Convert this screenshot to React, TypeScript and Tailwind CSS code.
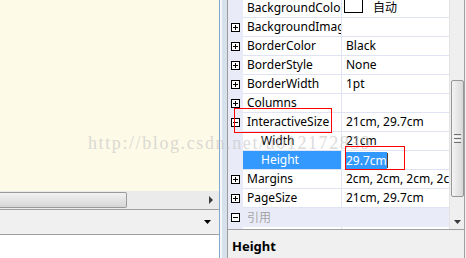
import React from "react";

const FONT = { fontFamily: '"Noto Sans", "Noto Sans CJK SC", sans-serif' };

function Box({ minus }: { minus?: boolean }) {
  return (
    <svg width="9" height="9" viewBox="0 0 9 9" className="block">
      <rect x="0.5" y="0.5" width="8" height="8" fill="white" stroke="black" />
      <line x1="2" y1="4.5" x2="7" y2="4.5" stroke="black" />
      {!minus && <line x1="4.5" y1="2" x2="4.5" y2="7" stroke="black" />}
    </svg>
  );
}

type RowProps = {
  icon?: "plus" | "minus";
  name: string;
  value?: React.ReactNode;
  child?: boolean;
  selected?: boolean;
};

function Row({ icon, name, value, child, selected }: RowProps) {
  return (
    <div className="flex h-[19px] shrink-0">
      <div className="flex w-[15px] shrink-0 items-center justify-center bg-[#e9ecf8]">
        {icon && <Box minus={icon === "minus"} />}
      </div>
      <div className="flex flex-1 border-b border-[#dfe3f3]">
        <div
          className={`flex w-[98px] shrink-0 items-center overflow-hidden whitespace-nowrap text-[12px] ${
            child ? "pl-[18px]" : "pl-[4px]"
          } ${selected ? "bg-[#3399ff] text-white" : "text-black"}`}
        >
          {name}
        </div>
        <div className="flex flex-1 items-center overflow-hidden whitespace-nowrap border-l border-[#dfe3f3] pl-[4px] text-[12px] text-black">
          {value}
        </div>
      </div>
    </div>
  );
}

export default function App() {
  return (
    <div className="relative flex h-[258px] w-[466px] overflow-hidden bg-white" style={FONT}>
      {/* Left panel */}
      <div className="flex w-[219px] shrink-0 flex-col">
        <div className="flex-1 bg-[#fefae8]" />
        {/* horizontal scrollbar */}
        <div className="flex h-[18px] shrink-0 items-center bg-[#ebebeb]">
          <div className="h-[16px] w-[127px] rounded-r-[2px] border border-l-0 border-[#9a9a9a] bg-gradient-to-b from-[#f2f2f2] to-[#d6d6d6]" />
          <div className="flex-1" />
          <svg width="5" height="8" viewBox="0 0 5 8" className="mr-[5px]">
            <path d="M0 0 L4 4 L0 8 Z" fill="#3a3a3a" />
          </svg>
        </div>
        <div className="h-px shrink-0 bg-[#a0a0a0]" />
        <div className="flex h-[24px] shrink-0 items-center justify-end bg-[#f0f0f0] pr-[8px]">
          <svg width="7" height="4" viewBox="0 0 7 4">
            <path d="M0 0 H7 L3.5 4 Z" fill="black" />
          </svg>
        </div>
        <div className="h-px shrink-0 bg-[#a0a0a0]" />
        <div className="h-[23px] shrink-0 bg-white" />
      </div>

      {/* splitter */}
      <div className="w-px shrink-0 bg-[#86a7cc]" />
      <div className="w-[2px] shrink-0 bg-[#f4f7fb]" />
      <div className="w-[5px] shrink-0 bg-[#d7e1ec]" />
      <div className="w-px shrink-0 bg-[#9c9c9c]" />

      {/* property grid */}
      <div className="flex w-[236px] shrink-0 flex-col">
        <div className="flex h-[229px] shrink-0">
          <div className="flex flex-1 flex-col overflow-hidden">
            <div className="mt-[-1px] flex flex-col">
              <Row
                name="BackgroundColor"
                value={
                  <div className="flex items-center">
                    <div className="ml-[-2px] mt-[-5px] h-[15px] w-[19px] border border-black bg-white" />
                    <span className="ml-[10px]">自动</span>
                  </div>
                }
              />
              <Row icon="plus" name="BackgroundImage" />
              <Row icon="plus" name="BorderColor" value="Black" />
              <Row icon="plus" name="BorderStyle" value="None" />
              <Row icon="plus" name="BorderWidth" value="1pt" />
              <Row icon="plus" name="Columns" />
              <Row icon="minus" name="InteractiveSize" value="21cm, 29.7cm" />
              <Row child name="Width" value="21cm" />
              <Row
                child
                selected
                name="Height"
                value={
                  <div className="flex items-center">
                    <span className="bg-[#3399ff] leading-[17px] text-white">29.7cm</span>
                    <span className="h-[15px] w-px bg-[#5a3a1a]" />
                  </div>
                }
              />
              <Row icon="plus" name="Margins" value="2cm, 2cm, 2cm, 2cm" />
              <Row icon="plus" name="PageSize" value="21cm, 29.7cm" />
              <div className="flex h-[19px] shrink-0 items-center bg-[#e9ecf8]">
                <div className="flex w-[15px] items-center justify-center">
                  <Box minus />
                </div>
                <span className="pl-[4px] text-[12px] text-[#a6a6a6]">引用</span>
              </div>
              <Row name="" />
            </div>
          </div>
          {/* vertical scrollbar */}
          <div className="flex w-[15px] shrink-0 flex-col items-center border-l border-[#e3e3e3] bg-[#efefef]">
            <div className="h-[80px] shrink-0" />
            <div className="flex h-[117px] w-[13px] shrink-0 flex-col items-center justify-center gap-[1px] rounded-[2px] border border-[#979797] bg-gradient-to-r from-[#f4f4f4] to-[#d8d8d8]">
              <div className="h-px w-[7px] bg-[#707070]" />
              <div className="h-px w-[7px] bg-[#f8f8f8]" />
              <div className="h-px w-[7px] bg-[#707070]" />
              <div className="h-px w-[7px] bg-[#f8f8f8]" />
              <div className="h-px w-[7px] bg-[#707070]" />
            </div>
            <div className="h-[23px] shrink-0" />
            <svg width="7" height="4" viewBox="0 0 7 4">
              <path d="M0 0 H7 L3.5 4 Z" fill="#3a3a3a" />
            </svg>
          </div>
        </div>
        <div className="h-px shrink-0 bg-[#a0a0a0]" />
        <div className="flex-1 bg-[#f0f0f0] pl-[4px] pt-[7px] text-[13px] font-bold leading-[18px] text-black">
          Height
        </div>
      </div>
      <div className="w-px shrink-0 bg-[#a0a0a0]" />
      <div className="w-px shrink-0 bg-[#f0f0f0]" />

      {/* watermark */}
      <div
        className="pointer-events-none absolute left-[88px] top-[130px] whitespace-nowrap text-[18px] tracking-[1.6px] text-[#c4c4c4] opacity-60"
        style={{ fontFamily: '"Liberation Serif", serif' }}
      >
        http://blog.csdn.net/u012172839
      </div>

      {/* red annotation boxes */}
      <div className="pointer-events-none absolute left-[234px] top-[108px] h-[25px] w-[98px] border border-[#ff0000]" />
      <div className="pointer-events-none absolute left-[345px] top-[146px] h-[24px] w-[60px] border border-[#ff0000]" />
    </div>
  );
}
